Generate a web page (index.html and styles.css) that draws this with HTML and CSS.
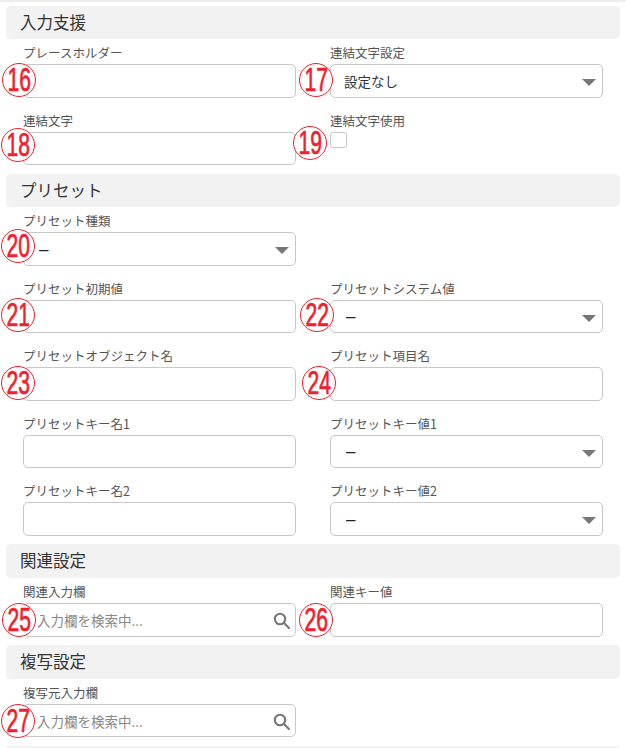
FILE: index.html
```html
<!DOCTYPE html>
<html lang="ja">
<head>
    <meta charset="UTF-8">
    <meta name="viewport" content="width=device-width, initial-scale=1.0">
    <title>入力欄設定</title>
    <link rel="stylesheet" href="styles.css">
</head>
<body>
    <div class="page">
        <h2 class="section-title">入力支援</h2>
        <div class="form-grid">
            <div class="field">
                <label>プレースホルダー</label>
                <div class="control">
                    <span class="mark mark-16"><span>16</span></span>
                    <input type="text">
                </div>
            </div>
            <div class="field">
                <label>連結文字設定</label>
                <div class="control select-box">
                    <span class="mark mark-17"><span>17</span></span>
                    <select><option>設定なし</option></select>
                </div>
            </div>
            <div class="field">
                <label>連結文字</label>
                <div class="control">
                    <span class="mark mark-18"><span>18</span></span>
                    <input type="text">
                </div>
            </div>
            <div class="field">
                <label>連結文字使用</label>
                <div class="control">
                    <span class="mark mark-19"><span>19</span></span>
                    <span class="check"></span>
                </div>
            </div>
        </div>

        <h2 class="section-title">プリセット</h2>
        <div class="form-grid">
            <div class="field">
                <label>プリセット種類</label>
                <div class="control select-box">
                    <span class="mark mark-20"><span>20</span></span>
                    <select class="select-dash"><option>–</option></select>
                </div>
            </div>
            <div class="field"></div>
            <div class="field">
                <label>プリセット初期値</label>
                <div class="control">
                    <span class="mark mark-21"><span>21</span></span>
                    <input type="text">
                </div>
            </div>
            <div class="field">
                <label>プリセットシステム値</label>
                <div class="control select-box">
                    <span class="mark mark-22"><span>22</span></span>
                    <select class="select-dash"><option>–</option></select>
                </div>
            </div>
            <div class="field">
                <label>プリセットオブジェクト名</label>
                <div class="control">
                    <span class="mark mark-23"><span>23</span></span>
                    <input type="text">
                </div>
            </div>
            <div class="field">
                <label>プリセット項目名</label>
                <div class="control">
                    <span class="mark mark-24"><span>24</span></span>
                    <input type="text">
                </div>
            </div>
            <div class="field">
                <label>プリセットキー名1</label>
                <div class="control"><input type="text"></div>
            </div>
            <div class="field">
                <label>プリセットキー値1</label>
                <div class="control select-box">
                    <select class="select-dash"><option>–</option></select>
                </div>
            </div>
            <div class="field">
                <label>プリセットキー名2</label>
                <div class="control"><input type="text"></div>
            </div>
            <div class="field">
                <label>プリセットキー値2</label>
                <div class="control select-box">
                    <select class="select-dash"><option>–</option></select>
                </div>
            </div>
        </div>

        <h2 class="section-title">関連設定</h2>
        <div class="form-grid">
            <div class="field">
                <label>関連入力欄</label>
                <div class="control">
                    <span class="mark mark-25"><span>25</span></span>
                    <input type="text" class="search-input" placeholder="入力欄を検索中...">
                    <svg class="search-icon" viewBox="0 0 16 16"><circle cx="6.6" cy="6.6" r="4.9"/><path d="M10.2 10.2 L15 15"/></svg>
                </div>
            </div>
            <div class="field">
                <label>関連キー値</label>
                <div class="control">
                    <span class="mark mark-26"><span>26</span></span>
                    <input type="text">
                </div>
            </div>
        </div>

        <h2 class="section-title">複写設定</h2>
        <div class="form-grid">
            <div class="field">
                <label>複写元入力欄</label>
                <div class="control">
                    <span class="mark mark-27"><span>27</span></span>
                    <input type="text" class="search-input" placeholder="入力欄を検索中...">
                    <svg class="search-icon" viewBox="0 0 16 16"><circle cx="6.6" cy="6.6" r="4.9"/><path d="M10.2 10.2 L15 15"/></svg>
                </div>
            </div>
        </div>
        <div class="bottom-line"></div>
    </div>
</body>
</html>
```
FILE: styles.css
```css
* {
    box-sizing: border-box;
}
body {
    margin: 0;
    background-color: white;
    font-family: "Noto Sans CJK JP", "Noto Sans", sans-serif;
    color: #333;
}
.page {
    border-top: 2px solid #eee;
    padding: 3.5px 6px 0 6px;
    width: 626px;
}
.section-title {
    margin: 0;
    height: 33.6px;
    line-height: 33.6px;
    padding-left: 14px;
    font-size: 16.5px;
    font-weight: 400;
    color: #333;
    background-color: #f2f2f2;
    border-radius: 5px;
}
.form-grid {
    display: grid;
    grid-template-columns: 273px 273px;
    column-gap: 34px;
    row-gap: 8.9px;
    padding-left: 17px;
    margin-bottom: 8.6px;
}
.field label {
    display: block;
    height: 25px;
    padding-top: 5px;
    line-height: 18px;
    font-size: 12.5px;
    color: #555;
}
.control {
    position: relative;
    height: 33.6px;
}
input[type="text"], select {
    width: 100%;
    height: 100%;
    padding: 0 13px;
    font-family: inherit;
    font-size: 13.5px;
    color: #333;
    background: white;
    border: 1px solid #c8c8c8;
    border-radius: 5px;
    appearance: none;
}
.select-dash {
    padding-left: 15px;
    font-family: "Liberation Sans", sans-serif;
    font-size: 17px;
    color: #222;
}
.search-input {
    padding-left: 13px;
}
.search-input::placeholder {
    color: #888;
    opacity: 1;
}
.select-box::after {
    content: "";
    position: absolute;
    top: 15px;
    right: 7px;
    border-left: 7px solid transparent;
    border-right: 7px solid transparent;
    border-top: 7px solid #777;
}
.search-icon {
    position: absolute;
    top: 9px;
    right: 6px;
    width: 17px;
    height: 17px;
    fill: none;
    stroke: #777;
    stroke-width: 2;
    stroke-linecap: round;
}
.check {
    display: block;
    width: 17px;
    height: 16px;
    background: white;
    border: 1px solid #c8c8c8;
    border-radius: 3px;
}
.bottom-line {
    height: 2px;
    background-color: #f2f2f2;
    border-radius: 2px 2px 0 0;
}

/* red numbers drawn over the form */
.mark {
    position: absolute;
    z-index: 1;
    display: flex;
    align-items: center;
    justify-content: center;
    width: 34px;
    height: 34px;
    background: white;
    border: 1px solid #f0202c;
    border-radius: 50%;
    color: #f0202c;
    font-family: "Liberation Sans", sans-serif;
    font-size: 33px;
    font-weight: 400;
    -webkit-text-stroke: 0.7px #f0202c;
}
.mark span {
    display: block;
    transform: scaleX(0.64);
}
.mark-16 { left: -21px; top: -1px; }
.mark-17 { left: -31px; top: -1px; }
.mark-18 { left: -22px; top: -4px; }
.mark-19 { left: -37px; top: -6px; }
.mark-20 { left: -22px; top: -3px; }
.mark-21 { left: -22px; top: -2px; }
.mark-22 { left: -30px; top: -2px; }
.mark-23 { left: -22px; top: -1px; }
.mark-24 { left: -28px; top: -1px; }
.mark-25 { left: -21px; top: 0; }
.mark-26 { left: -31px; top: 0; }
.mark-27 { left: -22px; top: 0; }
```
